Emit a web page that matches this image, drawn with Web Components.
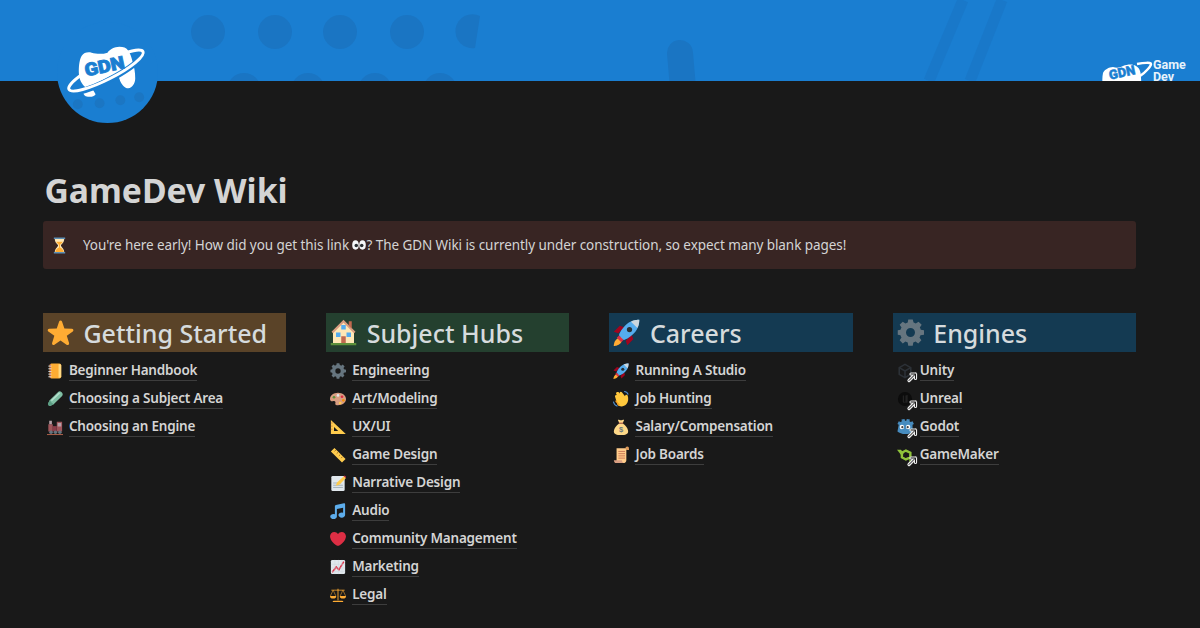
<!DOCTYPE html>
<html lang="en">
<head>
<meta charset="UTF-8">
<title>GameDev Wiki</title>
<style>
  html, body { margin: 0; height: 100%; background: #191919; }
  body { overflow: hidden; font-family: "Noto Sans", "Open Sans", sans-serif; color: #d4d4d4; }
</style>
</head>
<body>
<wiki-cover></wiki-cover>
<wiki-page>
  <h1 slot="title">GameDev Wiki</h1>
  <wiki-callout>
    <wiki-icon slot="icon" name="hourglass" size="17"></wiki-icon>
    You're here early! How did you get this link <wiki-icon name="eyes" size="14"></wiki-icon>? The GDN Wiki is currently under construction, so expect many blank pages!
  </wiki-callout>

  <wiki-column label="Getting Started" icon="star" tone="brown">
    <wiki-link icon="notebook">Beginner Handbook</wiki-link>
    <wiki-link icon="pencil">Choosing a Subject Area</wiki-link>
    <wiki-link icon="train">Choosing an Engine</wiki-link>
  </wiki-column>
  <wiki-column label="Subject Hubs" icon="house" tone="green">
    <wiki-link icon="gear">Engineering</wiki-link>
    <wiki-link icon="palette">Art/Modeling</wiki-link>
    <wiki-link icon="triangle">UX/UI</wiki-link>
    <wiki-link icon="ruler">Game Design</wiki-link>
    <wiki-link icon="memo">Narrative Design</wiki-link>
    <wiki-link icon="notes">Audio</wiki-link>
    <wiki-link icon="heart">Community Management</wiki-link>
    <wiki-link icon="chart">Marketing</wiki-link>
    <wiki-link icon="scales">Legal</wiki-link>
  </wiki-column>
  <wiki-column label="Careers" icon="rocket" tone="blue">
    <wiki-link icon="rocket">Running A Studio</wiki-link>
    <wiki-link icon="wave">Job Hunting</wiki-link>
    <wiki-link icon="money">Salary/Compensation</wiki-link>
    <wiki-link icon="scroll">Job Boards</wiki-link>
  </wiki-column>
  <wiki-column label="Engines" icon="gear" tone="blue">
    <wiki-link icon="unity" external>Unity</wiki-link>
    <wiki-link icon="unreal" external>Unreal</wiki-link>
    <wiki-link icon="godot" external>Godot</wiki-link>
    <wiki-link icon="gamemaker" external>GameMaker</wiki-link>
  </wiki-column>
</wiki-page>

<script>
  // twemoji-ish icons, all on a 36x36 box
  const ICONS = {
    star: '<path fill="#FFAC33" d="M27.3 34.7c-.4 0-.8-.1-1.2-.4L18 28.5l-8.1 5.8c-.7.5-1.7.5-2.4 0-.7-.5-1-1.4-.7-2.3l3-9.7-8-5.7c-.7-.5-1-1.4-.7-2.3.3-.8 1-1.4 1.9-1.4l10-.1 3.2-9.5c.3-.8 1-1.4 1.9-1.4s1.6.6 1.9 1.4l3.2 9.5 10 .1c.9 0 1.6.6 1.9 1.4.3.8 0 1.7-.7 2.3l-8 5.7 3 9.7c.3.8 0 1.7-.7 2.3-.4.3-.8.4-1.3.4z"/>',
    notebook: '<rect x="6" y="1" width="26" height="34" rx="4" fill="#FFAC33"/><path fill="#C1694F" d="M6 3h3v30H6z"/><path fill="#FFD983" d="M26 3h3a3 3 0 0 1 3 3v24a3 3 0 0 1-3 3h-3z"/><path stroke="#E1E8ED" stroke-width="2" d="M3 7h7M3 13h7M3 19h7M3 25h7M3 31h7"/>',
    pencil: '<path fill="#7FBFA4" d="M2 29l4-8L25 2c2-2 5-2 8 1s3 6 1 8L15 30l-8 4z"/><path fill="#5C9E84" d="M2 29l4-8 4 5 5 4-8 4-3 0z"/><path fill="#B5DFCE" d="M9 20L27 3l3 2L11 23z"/>',
    train: '<path fill="#A0555A" d="M3 12h10v16H3zM22 6h12v22H22z"/><path fill="#8A3D4A" d="M13 16h9v12h-9z"/><path fill="#B5A0A8" d="M24 9h8v8h-8zM5 4h6v8H5z"/><circle cx="9" cy="30" r="4" fill="#66757F"/><circle cx="19" cy="30" r="4" fill="#66757F"/><circle cx="29" cy="30" r="4" fill="#66757F"/><path stroke="#C1694F" stroke-width="2" d="M0 35h36"/>',
    house: '<path fill="#FFE8B6" d="M4 16L18 3l14 13v17H4z"/><path fill="#D99E82" d="M18 1L2 17l2 2L18 5l14 14 2-2z"/><path fill="#C1694F" d="M25 3h4v10l-4-4z"/><path fill="#55ACEE" d="M8 18h6v6H8zM22 18h6v6h-6zM15 8h6v6h-6z"/><path fill="#C1694F" d="M15 23h6v10h-6z"/><path fill="#5C913B" d="M1 32h34v3H1z"/>',
    gear: '<path fill="#66757F" d="M34 21v-6l-4.300-.7c-.3-1.100-.7-2.100-1.300-3l2.500-3.600-4.200-4.200-3.600 2.500c-.9-.5-1.900-1-3-1.300L19 .5h-6l-.7 4.200c-1.100.3-2.100.7-3 1.300L5.700 3.500 1.500 7.700 4 11.300c-.5.9-1 1.900-1.300 3L-1 15v6l3.700.7c.3 1.100.7 2.100 1.300 3l-2.500 3.600 4.200 4.200 3.600-2.500c.9.500 1.900 1 3 1.300l.7 4.200h6l.7-4.200c1.100-.3 2.100-.7 3-1.300l3.600 2.500 4.200-4.200-2.500-3.600c.5-.9 1-1.900 1.300-3zM16 24a6 6 0 1 1 0-12 6 6 0 0 1 0 12z" transform="translate(2 0)"/>',
    palette: '<path fill="#D99E82" d="M18 4C8 4 0 10.300 0 18c0 3.700 3 6 6 5 2.500-.8 5-1 6 1 1.500 3-2 5 1 7 2 1.300 3.500 1 5 1 10 0 18-6.300 18-14S28 4 18 4z"/><circle cx="9" cy="14" r="3" fill="#5C913B"/><circle cx="18" cy="10" r="3" fill="#E1E8ED"/><circle cx="27" cy="13" r="3" fill="#DD2E44"/><circle cx="30" cy="21" r="3" fill="#F4900C"/><circle cx="23" cy="27" r="3" fill="#FFCC4D"/>',
    triangle: '<path fill="#FFCC4D" fill-rule="evenodd" d="M2 2l33 31v1H2zM9 18v9h9.500z"/><path stroke="#C1694F" stroke-width="1.500" d="M2 9h4M2 16h4M2 23h4"/>',
    ruler: '<path fill="#FFCC4D" d="M2 10l8-8 25 25-8 8z"/><path stroke="#99641E" stroke-width="2" d="M10 10l3-3M15 15l3-3M20 20l3-3M25 25l3-3"/>',
    memo: '<path fill="#E1E8ED" d="M3 5a3 3 0 0 1 3-3h24a3 3 0 0 1 3 3v28a3 3 0 0 1-3 3H6a3 3 0 0 1-3-3z"/><path stroke="#99AAB5" stroke-width="2" d="M7 18h18M7 23h22M7 28h22"/><path fill="#FFCC4D" d="M13 24l3-7L31 3l5 4-15 15z"/><path fill="#DD2E44" d="M31 3l2-2 3 3-1 3z"/>',
    notes: '<path fill="#5DADEC" d="M34 3c0-1.500-1.200-2.500-2.600-2.200L13.400 4.500C12 4.800 11 6 11 7.500v17.600a7 7 0 0 0-3-.6c-4.100 0-7.500 2.500-7.500 5.700S3.900 36 8 36s7.500-2.500 7.500-5.800V13.500l14-2.800v11.400a7 7 0 0 0-3-.6c-4.100 0-7.500 2.500-7.500 5.700s3.400 5.800 7.500 5.800 7.500-2.600 7.500-5.800z"/>',
    heart: '<path fill="#DD2E44" d="M35.900 11.700C35.900 6.400 31.600 2 26.300 2c-3.400 0-6.400 1.800-8.300 4.500C16.100 3.800 13.100 2 9.700 2 4.400 2 .1 6.400.1 11.700c0 1.100.2 2.200.5 3.300C2.900 25.400 14.600 33.300 18 33.300c3.400 0 15.100-7.900 17.400-18.300.3-1.100.5-2.200.5-3.300z"/>',
    chart: '<path fill="#E1E8ED" d="M2 5a3 3 0 0 1 3-3h26a3 3 0 0 1 3 3v26a3 3 0 0 1-3 3H5a3 3 0 0 1-3-3z"/><path fill="none" stroke="#DD2E44" stroke-width="3.500" d="M5 30l9-12 6 6L31 6"/><path stroke="#CCD6DD" d="M2 12h32M2 20h32M2 28h32M11 2v32M19 2v32M27 2v32"/>',
    scales: '<path fill="#FFAC33" d="M17 4h2v26h-2zM9 31h18a3 3 0 0 1 3 3H6a3 3 0 0 1 3-3zM3 6h30v2H3z"/><path fill="#FFAC33" d="M0 20h14a7 6 0 0 1-14 0zM22 20h14a7 6 0 0 1-14 0z"/><path fill="none" stroke="#FFAC33" stroke-width="1.200" d="M7 7L1 20M7 7l6 13M29 7l-6 13M29 7l6 13"/>',
    rocket: '<path fill="#A0041E" d="M1 17l8-8 6 2-8 8zM19 35l8-8-2-6-8 8z"/><path fill="#FFAC33" d="M12 24c-3 0-7 2-9 5s-2 7-2 7 4 0 7-2 5-6 5-9z"/><path fill="#55ACEE" d="M35 1S24 0 16 9c-5 5-8 11-8 13l6 6c2 0 8-3 13-8C36 12 35 1 35 1z"/><path fill="#CCD6DD" d="M35 1s-6-.3-11 2.500L32.500 12C35.300 7 35 1 35 1z"/><circle cx="22" cy="14" r="3.500" fill="#292F33"/><path fill="#DD2E44" d="M8 22l6 6-3 3-6-6z"/>',
    wave: '<path fill="#FFC83D" d="M5 14c-2-4 2-6 4-4L7 6c-1-4 4-5 6-3l2 3c-1-4 3-6 5-3l7 9c0-4 4-5 6-2 2 7 2 14-3 20-6 6-15 6-20 1z"/><path fill="#F4A020" d="M7 20l9 12-3 1-8-10z"/><path stroke="#4F8FD0" stroke-width="2.500" fill="none" d="M25 1c4 0 8 3 9 7M1 24c1 5 4 9 9 10"/>',
    money: '<path fill="#FDD888" d="M14 10c-6 4-12 11-12 18 0 6 6 8 16 8s16-2 16-8c0-7-6-14-12-18z"/><path fill="#FDD888" d="M11 2c2-1 4 1 7 1s5-2 7-1l-3 7h-8z"/><path fill="#BF6952" d="M13 8h10v2.500H13z"/><text x="18" y="30" text-anchor="middle" font-family="Liberation Sans" font-size="17" font-weight="700" fill="#67757F">$</text>',
    scroll: '<path fill="#FFCC8A" d="M8 3h24l-2 3v24c0 3-2 6-5 6H3c3 0 5-3 5-6z"/><path fill="#D99E82" d="M2 30h18c0 3 2 6 5 6H6c-2 0-4-3-4-6z"/><path fill="#DD9B5C" d="M28 3a4 4 0 0 1 8 0v4h-6z"/><path stroke="#C1694F" stroke-width="1.800" d="M12 10h15M12 15h15M12 20h15M12 25h15"/>',
    hourglass: '<path fill="#FFE8B6" d="M8 4h20c0 8-7 11-7 14s7 6 7 14H8c0-8 7-11 7-14S8 12 8 4z"/><path fill="#FFAC33" d="M11 10h14c-2 4-6 5-6 8l0 4c3 1 7 4 8 10H9c1-6 5-9 8-10v-4c0-3-4-4-6-8z"/><path fill="#5c8fb5" d="M6 1h24v3H6zM6 32h24v3H6z"/>',
    eyes: '<ellipse cx="9" cy="18" rx="8.500" ry="12" fill="#F5F8FA"/><ellipse cx="27" cy="18" rx="8.500" ry="12" fill="#F5F8FA"/><circle cx="11" cy="19" r="4.500" fill="#292F33"/><circle cx="25" cy="19" r="4.500" fill="#292F33"/>',
    unity: '<path fill="none" stroke="#2c3137" stroke-width="3.500" d="M18 3l13 7.500v15L18 33 5 25.500v-15zM18 18V33M18 18L5 10.500M18 18l13-7.500"/>',
    unreal: '<circle cx="18" cy="18" r="16" fill="#0c0c0c"/><path fill="#222" d="M13 10h3v13c0 2 3 2 3 0V10l5-1v17l-5 1v-2c-2 2-6 2-6-2z"/>',
    godot: '<path fill="#478CBF" d="M4 13l-3-2 3-6 4 2 3-2-1-4 7-1 1 4h3l1-4 7 1-1 4 3 2 4-2 3 6-3 2v15c-2 3-8 6-16 6s-14-3-18-6z"/><circle cx="11" cy="18" r="5" fill="#fff"/><circle cx="25" cy="18" r="5" fill="#fff"/><circle cx="12" cy="18.500" r="2.500" fill="#414042"/><circle cx="24" cy="18.500" r="2.500" fill="#414042"/>',
    gamemaker: '<path fill="none" stroke="#8FC33A" stroke-width="5.500" d="M20 8l10 5v10l-10 5-9-5V13z"/><path fill="#8FC33A" d="M0 6h9l6 8-4 6z"/><path fill="#6FA32A" d="M26 26l8 6-6 2z"/>',
  };

  class WikiIcon extends HTMLElement {
    connectedCallback() {
      const size = this.getAttribute('size') || 16;
      this.attachShadow({mode: 'open'});
      this.shadowRoot.innerHTML = `<style>
        :host { display: inline-block; width: ${size}px; height: ${size}px; vertical-align: -2px; flex: none; }
        svg { display: block; width: 100%; height: 100%; overflow: visible; }
      </style><svg viewBox="0 0 36 36">${ICONS[this.getAttribute('name')] || ''}</svg>`;
    }
  }
  customElements.define('wiki-icon', WikiIcon);

  class WikiCover extends HTMLElement {
    connectedCallback() {
      this.attachShadow({mode: 'open'});
      const dots = [[208,32],[275,32],[340,32],[407,32],[244,90],[308,90],[375,90],[440,90]]
        .map(d => `<circle cx="${d[0]}" cy="${d[1]}" r="17"/>`).join('');
      this.shadowRoot.innerHTML = `<style>
        :host { display: block; position: relative; height: 81px; background: #1a7ed1; }
        .art { display: block; width: 100%; height: 81px; }
        .art circle, .art .half { fill: #1a75c3; }
        .art .line { fill: none; stroke: #1978c9; stroke-width: 11; }
        .art .rod { fill: none; stroke: #1a75c3; stroke-width: 26; stroke-linecap: round; }
        .badge { position: absolute; left: 57px; top: 22px; width: 101px; height: 101px; }
        .side { position: absolute; left: 1099px; top: 54px; height: 27px; width: 90px; overflow: hidden; }
        .side svg { position: absolute; left: 3px; top: 4px; width: 52px; height: 34px; }
        .side span { position: absolute; left: 54px; top: 5px; font: 700 12.500px/12px Roboto, sans-serif; color: #e8f3fb; }
      </style>
      <svg class="art" viewBox="0 0 1200 81">
        ${dots}
        <path class="half" d="M480 16a17 17 0 1 0 -5 32z"/>
        <path class="rod" d="M680 53L684 100"/>
        <path class="line" d="M963 0L929 81"/>
        <path class="line" d="M1002 0L970 81"/>
      </svg>
      <svg class="badge" viewBox="0 0 102 102">
        <circle cx="51" cy="51" r="51" fill="#1a7ed1"/>
        <g fill="#1b76c3"><circle cx="21" cy="83" r="5"/><circle cx="43" cy="82" r="5"/><circle cx="64" cy="79" r="5"/><circle cx="83" cy="76" r="5"/></g>
        <path fill="#fff" d="M29 75c-2-1-3-3-2-6l9-1 3 5c-2 3-6 3-10 2z"/>
        <path fill="#fff" d="M22 50c0-7 1-13 3-16 2-3 6-4 10-3 4 1 10 2 16 0 2-3 7-6 12-6 4 0 7 1 9 4 2 3 3 6 4 10 2 6 3 12 3 18 0 5-3 9-7 10-3 0-6-3-8-7l-3-8c-8 3-20 10-32 14-4-3-7-8-7-16z"/>
        <g transform="rotate(-27 49.500 49)" fill="none">
          <path stroke="#1a7ed1" stroke-width="6" d="M13 55A42 9 0 0 0 88 52"/>
          <path stroke="#fff" stroke-width="3" d="M7.500 49A42 9 0 0 0 91.500 49A42 9 0 0 0 72 41.500M7.500 49A42 9 0 0 1 26 41.500"/>
        </g>
        <text x="48" y="51" text-anchor="middle" textLength="41" lengthAdjust="spacingAndGlyphs" transform="rotate(-12 48 45)" font-family="Roboto, sans-serif" font-weight="900" font-size="18" stroke="#1a7ed1" stroke-width=".8" fill="#1a7ed1">GDN</text>
      </svg>
      <div class="side">
        <svg viewBox="0 0 52 34">
          <path fill="#fff" d="M1 15c1-3 6-6 10-6 4 1 6 1 10-1 5-2 10-2 13 0 4 2 5 7 5 12l1 14H2C0 26 0 20 1 15z"/>
          <path fill="none" stroke="#fff" stroke-width="2.500" d="M35 6c6-1 14-2 14 0s-5 8-11 12"/>
          <text x="20" y="19" text-anchor="middle" transform="rotate(-12 20 14)" font-family="Roboto, sans-serif" font-weight="900" font-size="13" stroke="#1a7ed1" stroke-width=".5" fill="#1a7ed1">GDN</text>
        </svg>
        <span>Game<br>Dev</span>
      </div>`;
    }
  }
  customElements.define('wiki-cover', WikiCover);

  class WikiPage extends HTMLElement {
    connectedCallback() {
      this.attachShadow({mode: 'open'});
      this.shadowRoot.innerHTML = `<style>
        :host { display: block; padding: 86px 64px 0 42.900px; }
        .title { margin-bottom: 8px; padding-left: 1.500px; }
        ::slotted(h1) { margin: 0; font-size: 33.700px; line-height: 46px; font-weight: 700; color: #d4d4d4; }
        .cols { display: grid; grid-template-columns: repeat(4, 1fr); column-gap: 40px; margin-top: 44px; }
      </style>
      <div class="title"><slot name="title"></slot></div>
      <slot name="notice"></slot>
      <div class="cols"><slot></slot></div>`;
      const callout = this.querySelector('wiki-callout');
      if (callout) callout.slot = 'notice';
    }
  }
  customElements.define('wiki-page', WikiPage);

  class WikiCallout extends HTMLElement {
    connectedCallback() {
      this.attachShadow({mode: 'open'});
      this.shadowRoot.innerHTML = `<style>
        :host { display: flex; align-items: center; gap: 13px; height: 48px; padding: 0 12px 0 7px; box-sizing: border-box; background: #382523; border-radius: 3px; font-size: 13.500px; letter-spacing: -0.070px; color: #d4d4d4; }
        .ic { display: flex; width: 20px; justify-content: center; }
      </style><span class="ic"><slot name="icon"></slot></span><span><slot></slot></span>`;
    }
  }
  customElements.define('wiki-callout', WikiCallout);

  const TONES = { brown: '#5a4328', green: '#24402f', blue: '#143a52' };

  class WikiColumn extends HTMLElement {
    connectedCallback() {
      const tone = TONES[this.getAttribute('tone')] || TONES.blue;
      this.attachShadow({mode: 'open'});
      this.shadowRoot.innerHTML = `<style>
        :host { display: block; min-width: 0; }
        h2 { display: flex; align-items: center; gap: 9.500px; margin: 0 0 5px; height: 39px; padding-left: 4px; background: ${tone}; font-size: 25px; font-weight: 500; color: #d6dbdd; white-space: nowrap; }
        .list { display: flex; flex-direction: column; }
      </style>
      <h2><wiki-icon name="${this.getAttribute('icon')}" size="27"></wiki-icon><span>${this.getAttribute('label')}</span></h2>
      <div class="list"><slot></slot></div>`;
    }
  }
  customElements.define('wiki-column', WikiColumn);

  class WikiLink extends HTMLElement {
    connectedCallback() {
      const external = this.hasAttribute('external');
      this.attachShadow({mode: 'open'});
      this.shadowRoot.innerHTML = `<style>
        :host { display: flex; align-items: center; height: 28px; padding-left: 4px; font-size: 13.500px; font-weight: 600; letter-spacing: -0.200px; color: #d4d4d4; white-space: nowrap; }
        .ic { position: relative; display: flex; width: 16px; height: 16px; margin-right: ${external ? 7 : 6}px; flex: none; }
        .arrow { position: absolute; right: -5px; bottom: -4px; width: 12px; height: 12px; }
        .t { border-bottom: 1px solid rgba(255,255,255,.16); line-height: 19px; }
      </style>
      <span class="ic"><wiki-icon name="${this.getAttribute('icon')}" size="16"></wiki-icon>
      ${external ? `<svg class="arrow" viewBox="0 0 12 12"><g fill="none"><path stroke="#ececec" stroke-width="3.200" stroke-linejoin="round" stroke-linecap="round" d="M5 3h4.500v4.500M9.500 3L3 9.500"/><path stroke="#191919" stroke-width="1" stroke-linecap="round" d="M5 3h4.500v4.500M9.500 3L3 9.500"/></g></svg>` : ''}
      </span><span class="t"><slot></slot></span>`;
    }
  }
  customElements.define('wiki-link', WikiLink);
</script>
</body>
</html>
